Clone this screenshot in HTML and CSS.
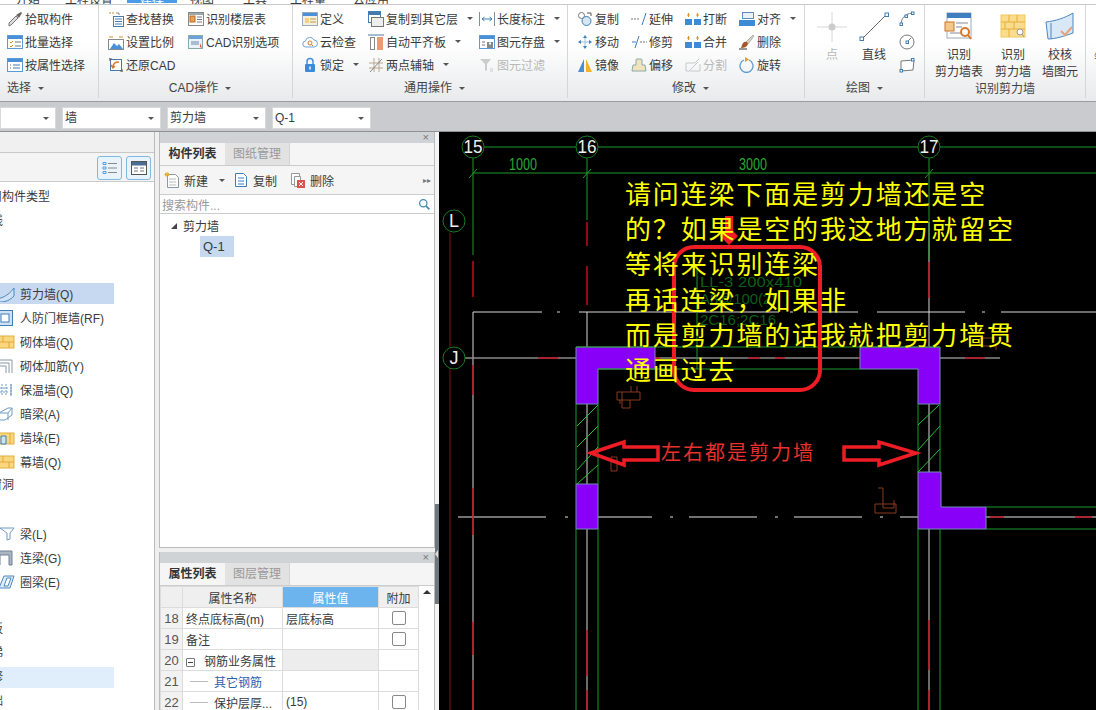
FILE: index.html
```html
<!DOCTYPE html>
<html lang="zh-CN">
<head>
  <meta charset="UTF-8">
  <title>剪力墙 识别</title>
  <link rel="stylesheet" href="styles.css">
</head>
<body>
  <!-- icon set -->
  <svg class="defs" width="0" height="0">
    <symbol id="i-pick" viewBox="0 0 16 16"><path d="M2 15l2-1 7-7-2-2-7 7z" fill="#ddd" stroke="#777"/><path d="M9 4l3 3 3-5-1-1z" fill="#666"/></symbol>
    <symbol id="i-batch" viewBox="0 0 16 16"><rect x=".5" y="1.5" width="15" height="13" fill="#fff" stroke="#5b9bd5"/><rect x="1" y="2" width="14" height="3" fill="#4a90d9"/><path d="M3 8l1 1 2-2M3 12l1 1 2-2" fill="none" stroke="#d98c2b"/><path d="M8 8h6M8 12h6" stroke="#777"/></symbol>
    <symbol id="i-attr" viewBox="0 0 16 16"><rect x=".5" y="1.5" width="15" height="13" fill="#fff" stroke="#5b9bd5"/><rect x="1" y="2" width="14" height="3" fill="#4a90d9"/><path d="M3 8h1M3 11h1M6 8h7M6 11h7" stroke="#4a78a8"/></symbol>
    <symbol id="i-find" viewBox="0 0 16 16"><path d="M1 2h5" stroke="#d98c2b" stroke-dasharray="2 1"/><path d="M8 2l3 0v2" fill="none" stroke="#888"/><rect x="5.500" y="5.500" width="10" height="10" fill="#fff" stroke="#3f7fb5"/><path d="M7 8h7M7 10.500h7M7 13h7" stroke="#3f7fb5"/></symbol>
    <symbol id="i-floor" viewBox="0 0 16 16"><rect x=".5" y="1.500" width="15" height="13" fill="#fff" stroke="#888"/><rect x="1" y="2" width="14" height="2" fill="#9aa"/><rect x="2" y="5" width="5" height="6" fill="#e8a05a" stroke="#c06a20"/><path d="M9 6h5M9 8.500h5M9 11h5" stroke="#778"/></symbol>
    <symbol id="i-scale" viewBox="0 0 16 16"><path d="M1 3h4M11 3h4" stroke="#d98c2b"/><rect x=".5" y="5.500" width="15" height="10" fill="#fff" stroke="#888"/><path d="M2 15l4-6 3 3 2-2 4 5z" fill="#4a90d9"/></symbol>
    <symbol id="i-cad" viewBox="0 0 16 16"><rect x=".5" y="1.500" width="14" height="13" fill="#eaf2fb" stroke="#8aa"/><rect x="1" y="2" width="13" height="3" fill="#6fa3d8"/><path d="M3 8h8M3 10h8" stroke="#6a88a8"/><path d="M12 9l2 5-2-1z" fill="#d9503f"/></symbol>
    <symbol id="i-restore" viewBox="0 0 16 16"><rect x="2.500" y="2.500" width="11" height="11" fill="#fff" stroke="#4a78a8"/><path d="M1 2h3M2 1v3M12 14h3M14 12v3" stroke="#666"/><path d="M11 5c-4 0-6 2-6 5M3 8l2 3 2-2" fill="none" stroke="#d9782b" stroke-width="1.400"/></symbol>
    <symbol id="i-define" viewBox="0 0 16 16"><rect x=".5" y="1.500" width="15" height="13" fill="#f5efdc" stroke="#9ab"/><rect x="1" y="2" width="14" height="3" fill="#4a90d9"/><path d="M8 8h6M8 11h6" stroke="#c79b3b"/><rect x="3" y="7" width="4" height="5" fill="#f2d27a"/></symbol>
    <symbol id="i-cloud" viewBox="0 0 16 16"><path d="M4 13a3 3 0 0 1-.5-6 4.500 4.500 0 0 1 8.500-1 3.500 3.500 0 0 1 0 7z" fill="#fff" stroke="#6fa3d8"/><circle cx="8" cy="9" r="2" fill="none" stroke="#d9782b"/><path d="M9.500 10.500l1.500 1.500" stroke="#d9782b"/></symbol>
    <symbol id="i-lock" viewBox="0 0 16 16"><path d="M5 7V4.500a3 3 0 0 1 6 0V7" fill="none" stroke="#4a90d9" stroke-width="1.500"/><rect x="3" y="7" width="10" height="8" rx="1" fill="#3f8ad6"/><rect x="7.300" y="9.500" width="1.400" height="3" fill="#fff"/></symbol>
    <symbol id="i-copyfloor" viewBox="0 0 16 16"><rect x=".5" y=".5" width="12" height="11" fill="#fff" stroke="#3f7fb5"/><rect x="1" y="1" width="11" height="3" fill="#4a78a8"/><rect x="3.500" y="6.500" width="12" height="9" fill="#eee" stroke="#777"/></symbol>
    <symbol id="i-board" viewBox="0 0 16 16"><path d="M0 1h16" stroke="#4a78a8"/><rect x="2.500" y="3.500" width="4" height="12" fill="#fff" stroke="#888"/><rect x="9" y="3" width="6" height="13" fill="#ee9a70"/></symbol>
    <symbol id="i-twopt" viewBox="0 0 16 16"><path d="M1 6h14M1 11h14M6 1v14M11 1v14" stroke="#b9a68c"/><path d="M2 15L14 2" stroke="#888"/></symbol>
    <symbol id="i-length" viewBox="0 0 16 16"><path d="M.5 1v14M15.500 1v14" stroke="#7c8fa3"/><path d="M3 8h10M3 8l2.500-2M3 8l2.500 2M13 8l-2.500-2M13 8l-2.500 2" fill="none" stroke="#3f7fb5"/></symbol>
    <symbol id="i-save" viewBox="0 0 16 16"><rect x=".5" y="1.500" width="15" height="13" fill="#fff" stroke="#5b9bd5"/><rect x="1" y="2" width="14" height="3" fill="#4a90d9"/><path d="M3 8h3M3 11h3" stroke="#777"/><rect x="8" y="8" width="6" height="6" fill="#888"/><rect x="10" y="8.500" width="2" height="2" fill="#fff"/></symbol>
    <symbol id="i-filter" viewBox="0 0 16 16"><path d="M1 2h11L8 7v6l-2 1V7z" fill="#ccc"/><path d="M11 12h3M11 14h3" stroke="#ccc"/></symbol>
    <symbol id="i-copy" viewBox="0 0 16 16"><circle cx="4.500" cy="4.500" r="3" fill="#fff" stroke="#777"/><circle cx="9.500" cy="10" r="4.500" fill="#d6e6f5" stroke="#3f7fb5"/><path d="M10 2h4v3" fill="none" stroke="#555"/></symbol>
    <symbol id="i-move" viewBox="0 0 16 16"><path d="M8 1l2 3H6zM8 15l-2-3h4zM1 8l3-2v4zM15 8l-3 2V6z" fill="#3f7fb5"/><path d="M8 4v8M4 8h8" stroke="#9dbfdd"/></symbol>
    <symbol id="i-mirror" viewBox="0 0 16 16"><path d="M7 2v13H1z" fill="#4a8fd0"/><path d="M9 2v13h6z" fill="#f0b429"/></symbol>
    <symbol id="i-extend" viewBox="0 0 16 16"><path d="M0 8h9" stroke="#777" stroke-dasharray="2 1"/><path d="M11 14l4-12" stroke="#3f7fb5"/></symbol>
    <symbol id="i-trim" viewBox="0 0 16 16"><path d="M9 8h7" stroke="#777" stroke-dasharray="2 1"/><path d="M1 8h4" stroke="#3f7fb5"/><path d="M4 14L8 2" stroke="#3f7fb5"/></symbol>
    <symbol id="i-offset" viewBox="0 0 16 16"><path d="M5 8V3a1 1 0 0 1 1-1h4a1 1 0 0 1 1 1v5h3l1 6H1l1-6z" fill="#f1e3bd" stroke="#8aa"/></symbol>
    <symbol id="i-split" viewBox="0 0 16 16"><path d="M1 14V6h9l4-4M1 14h14V7" fill="none" stroke="#c8c8c8"/><path d="M5 13l8-8" stroke="#c8c8c8"/></symbol>
    <symbol id="i-break" viewBox="0 0 16 16"><rect x="0" y="8" width="7" height="6" fill="#3f8ad6"/><rect x="9" y="8" width="7" height="6" fill="#3f8ad6"/><path d="M3.500 2v4M12.500 2v4M2 4h3M11 4h3" stroke="#d9982b"/></symbol>
    <symbol id="i-align" viewBox="0 0 16 16"><rect x="3.500" y="1.500" width="11" height="6" fill="#e8f0f8" stroke="#5b8fc0"/><rect x="0" y="9" width="16" height="6" fill="#3f8ad6"/></symbol>
    <symbol id="i-del" viewBox="0 0 16 16"><path d="M7 8l7-7 1 1-6 8z" fill="#d9d2c0" stroke="#777" stroke-width=".5"/><path d="M3 11c1-3 3-4 5-3l1 2c-1 3-4 4-7 4z" fill="#a5562b"/><path d="M0 15h8" stroke="#333"/></symbol>
    <symbol id="i-rotate" viewBox="0 0 16 16"><path d="M5 3a6.500 6.500 0 1 0 5 0" fill="none" stroke="#5b9bd5" stroke-width="1.300"/><path d="M6 0l4 2.500L6 5z" fill="#e8982b"/></symbol>
    <symbol id="i-arc" viewBox="0 0 16 16"><path d="M2 14C2 7 6 3 13 2" fill="none" stroke="#777"/><rect x="1" y="12" width="2.500" height="2.500" fill="#fff" stroke="#3f7fb5"/><rect x="6" y="4" width="2.500" height="2.500" fill="#fff" stroke="#3f7fb5"/><rect x="12.500" y="1" width="2.500" height="2.500" fill="#fff" stroke="#3f7fb5"/></symbol>
    <symbol id="i-circle" viewBox="0 0 16 16"><circle cx="8" cy="8" r="7" fill="#fff" stroke="#777"/><rect x="7" y="7" width="2.500" height="2.500" fill="#fff" stroke="#3f7fb5"/><path d="M9 7l3-3" stroke="#777"/></symbol>
    <symbol id="i-rect" viewBox="0 0 16 16"><path d="M2 4l13-1-1 10-12 1z" fill="#fff" stroke="#777"/><rect x="12.500" y="1.500" width="2.500" height="2.500" fill="#fff" stroke="#3f7fb5"/><rect x="1" y="12.500" width="2.500" height="2.500" fill="#fff" stroke="#3f7fb5"/></symbol>
    <symbol id="i-new" viewBox="0 0 16 16"><path d="M3.500 2.500h8l3 3v10h-11z" fill="#fff" stroke="#8a99a8"/><path d="M5 7h7M5 10h7M5 13h7" stroke="#bbb"/><path d="M3 0v5M.5 2.500h5M1 1l4 3M5 1L1 4" stroke="#e8a52b"/></symbol>
    <symbol id="i-dup" viewBox="0 0 16 16"><path d="M2.500 1.500h8l3 3v10h-11z" fill="#fff" stroke="#3f7fb5"/><path d="M5 6h6M5 9h6M5 12h6" stroke="#3f7fb5"/></symbol>
    <symbol id="i-remove" viewBox="0 0 16 16"><path d="M1.500 1.500h8v11h-8z" fill="#fff" stroke="#999"/><path d="M4.500 4.500h6v10h-6z" fill="#fff" stroke="#999"/><rect x="7" y="8" width="8" height="8" fill="#d9534f"/><path d="M9 10l4 4M13 10l-4 4" stroke="#fff"/></symbol>
    <symbol id="i-wall" viewBox="0 0 16 16"><path d="M-6 13c7 0 14-3 20-11v8c-4 4-8 6-14 6z" fill="#cfe2f5" stroke="#4a88c0"/></symbol>
    <symbol id="i-door" viewBox="0 0 16 16"><rect x="-2.500" y=".5" width="15" height="15" fill="#cfe2f5" stroke="#3f7fb5"/><rect x="1" y="4" width="8" height="8" fill="#fff" stroke="#3f7fb5"/></symbol>
    <symbol id="i-brick" viewBox="0 0 16 16"><rect x="-2" y="2" width="16" height="12" fill="#f8d77f" stroke="#e0b040"/><path d="M-2 8h16M3 2v6M9 8v6" stroke="#e8a53b" fill="none"/></symbol>
    <symbol id="i-rebar" viewBox="0 0 16 16"><path d="M-2 2h14v13M-2 5h11v10M-2 8h8v7" fill="none" stroke="#8a99a8"/></symbol>
    <symbol id="i-insul" viewBox="0 0 16 16"><path d="M2 2v12M6 2v12M11 2v12M0 6h8M0 10h8" stroke="#6f9cc4" stroke-dasharray="2 1" fill="none"/><path d="M11 2v12" stroke="#6f9cc4"/></symbol>
    <symbol id="i-beam" viewBox="0 0 16 16"><path d="M-1 7l9-5h4v7l-7 5h-6zM-1 7h9v7M8 7l4-5" fill="#fff" stroke="#6f9cc4"/></symbol>
    <symbol id="i-pier" viewBox="0 0 16 16"><rect x="-2" y="3" width="16" height="11" fill="#f8d77f" stroke="#e0b040"/><path d="M1 6h5v8H1z" fill="#cfe2f5" stroke="#3f7fb5"/><path d="M10 3v11" stroke="#e8a53b"/></symbol>
    <symbol id="i-lbeam" viewBox="0 0 16 16"><path d="M0 2h14l-4 5v6l-3 1V7z" fill="#fff" stroke="#6f9cc4"/></symbol>
    <symbol id="i-link" viewBox="0 0 16 16"><path d="M-3 1h15v14H9V5H0v10h-3z" fill="#a9b5c1" stroke="#6f8296"/></symbol>
    <symbol id="i-ring" viewBox="0 0 16 16"><path d="M4 2h10l-4 12H-1z" fill="#e0ecf8" stroke="#4a88c0"/><path d="M7 4h4l-3 8H4z" fill="#fff" stroke="#4a88c0"/></symbol>
    <symbol id="i-search" viewBox="0 0 16 16"><circle cx="6.500" cy="6.500" r="4.500" fill="#fff" stroke="#3f8ab5" stroke-width="1.500"/><path d="M10 10l4 4" stroke="#3f8ab5" stroke-width="2"/></symbol>
    <symbol id="i-list" viewBox="0 0 16 16"><path d="M1 2.500h3v2H1zM1 7h3v2H1zM1 11.500h3v2H1z" fill="none" stroke="#5b9bd5"/><path d="M6 3.500h9M6 8h9M6 12.500h9" stroke="#888"/></symbol>
    <symbol id="i-form" viewBox="0 0 16 16"><rect x=".5" y="1.500" width="15" height="13" fill="#fff" stroke="#555"/><rect x="1" y="2" width="14" height="3.500" fill="#4a6f94"/><path d="M3 8h4M9 8h4M3 11h4M9 11h4" stroke="#777"/></symbol>
  </svg>

  <div class="tabs">
    <span class="tab tab-first">开始</span>
    <span class="tab tab-setup">工程设置</span>
    <span class="tab tab-active">建模</span>
    <span class="tab tab-view">视图</span>
    <span class="tab tab-tool">工具</span>
    <span class="tab tab-qty">工程量</span>
    <span class="tab tab-cloud">云应用</span>
  </div>

  <div class="ribbon">
    <div class="group group-select">
      <div class="group-body">
        <div class="col">
          <div class="item"><svg class="ic"><use href="#i-pick"/></svg>拾取构件</div>
          <div class="item"><svg class="ic"><use href="#i-batch"/></svg>批量选择</div>
          <div class="item"><svg class="ic"><use href="#i-attr"/></svg>按属性选择</div>
        </div>
      </div>
      <div class="group-label label-left">选择<i class="caret"></i></div>
    </div>
    <div class="group group-cad">
      <div class="group-body">
        <div class="col col-80">
          <div class="item"><svg class="ic"><use href="#i-find"/></svg>查找替换</div>
          <div class="item"><svg class="ic"><use href="#i-scale"/></svg>设置比例</div>
          <div class="item"><svg class="ic"><use href="#i-restore"/></svg>还原CAD</div>
        </div>
        <div class="col">
          <div class="item"><svg class="ic"><use href="#i-floor"/></svg>识别楼层表</div>
          <div class="item"><svg class="ic"><use href="#i-cad"/></svg>CAD识别选项</div>
        </div>
      </div>
      <div class="group-label">CAD操作<i class="caret"></i></div>
    </div>
    <div class="group group-common">
      <div class="group-body">
        <div class="col col-66">
          <div class="item"><svg class="ic"><use href="#i-define"/></svg>定义</div>
          <div class="item"><svg class="ic"><use href="#i-cloud"/></svg>云检查</div>
          <div class="item"><svg class="ic"><use href="#i-lock"/></svg>锁定<i class="caret"></i></div>
        </div>
        <div class="col col-111">
          <div class="item"><svg class="ic"><use href="#i-copyfloor"/></svg>复制到其它层<i class="caret"></i></div>
          <div class="item"><svg class="ic"><use href="#i-board"/></svg>自动平齐板<i class="caret"></i></div>
          <div class="item"><svg class="ic"><use href="#i-twopt"/></svg>两点辅轴<i class="caret"></i></div>
        </div>
        <div class="col">
          <div class="item"><svg class="ic"><use href="#i-length"/></svg>长度标注<i class="caret"></i></div>
          <div class="item"><svg class="ic"><use href="#i-save"/></svg>图元存盘<i class="caret"></i></div>
          <div class="item item-off"><svg class="ic"><use href="#i-filter"/></svg>图元过滤</div>
        </div>
      </div>
      <div class="group-label">通用操作<i class="caret"></i></div>
    </div>
    <div class="group group-edit">
      <div class="group-body">
        <div class="col col-54">
          <div class="item"><svg class="ic"><use href="#i-copy"/></svg>复制</div>
          <div class="item"><svg class="ic"><use href="#i-move"/></svg>移动</div>
          <div class="item"><svg class="ic"><use href="#i-mirror"/></svg>镜像</div>
        </div>
        <div class="col col-54">
          <div class="item"><svg class="ic"><use href="#i-extend"/></svg>延伸</div>
          <div class="item"><svg class="ic"><use href="#i-trim"/></svg>修剪</div>
          <div class="item"><svg class="ic"><use href="#i-offset"/></svg>偏移</div>
        </div>
        <div class="col col-54">
          <div class="item"><svg class="ic"><use href="#i-break"/></svg>打断</div>
          <div class="item"><svg class="ic"><use href="#i-break"/></svg>合并</div>
          <div class="item item-off"><svg class="ic"><use href="#i-split"/></svg>分割</div>
        </div>
        <div class="col">
          <div class="item"><svg class="ic"><use href="#i-align"/></svg>对齐<i class="caret"></i></div>
          <div class="item"><svg class="ic"><use href="#i-del"/></svg>删除</div>
          <div class="item"><svg class="ic"><use href="#i-rotate"/></svg>旋转</div>
        </div>
      </div>
      <div class="group-label">修改<i class="caret"></i></div>
    </div>
    <div class="group group-draw">
      <div class="group-body">
        <div class="big big-point">
          <svg class="big-ic" viewBox="0 0 30 30"><path d="M15 0v30M0 15h30" stroke="#d8d8d8"/><circle cx="15" cy="15" r="3.500" fill="#ccc"/></svg>
          <span>点</span>
        </div>
        <div class="big big-line">
          <svg class="big-ic" viewBox="0 0 30 30"><path d="M3 27L27 3" stroke="#666"/><rect x="1" y="25" width="3.500" height="3.500" fill="#fff" stroke="#3f7fb5"/><rect x="26" y="1" width="3.500" height="3.500" fill="#fff" stroke="#3f7fb5"/></svg>
          <span>直线</span>
        </div>
        <div class="col col-small">
          <div class="item"><svg class="ic"><use href="#i-arc"/></svg></div>
          <div class="item"><svg class="ic"><use href="#i-circle"/></svg></div>
          <div class="item"><svg class="ic"><use href="#i-rect"/></svg></div>
        </div>
      </div>
      <div class="group-label">绘图<i class="caret"></i></div>
    </div>
    <div class="group group-recog">
      <div class="group-body">
        <div class="big big-wide">
          <svg class="big-ic" viewBox="0 0 30 30"><rect x="3" y="1" width="24" height="25" fill="#fff" stroke="#9ab"/><rect x="3" y="1" width="24" height="5" fill="#3f7fc0"/><path d="M12 11h12M12 15h6M6 21h11" stroke="#889"/><rect x="1" y="10" width="9" height="9" fill="#f2c98a" stroke="#c9752b"/><circle cx="21" cy="20" r="4" fill="#fff" stroke="#d9782b" stroke-width="2"/><path d="M24 23l3 4" stroke="#d9782b" stroke-width="2"/></svg>
          <span>识别<br>剪力墙表</span>
        </div>
        <div class="big big-mid">
          <svg class="big-ic" viewBox="0 0 30 30"><rect x="3" y="3" width="24" height="22" fill="#f9dc8c" stroke="#f0c95c"/><path d="M3 10h24M3 17h24M11 3v7M19 3v7M7 10v7M16 10v7M11 17v8" stroke="#e8ae3e" fill="none"/><circle cx="22" cy="20" r="3" fill="#fff" stroke="#999"/><path d="M24 22l2 3" stroke="#999"/></svg>
          <span>识别<br>剪力墙</span>
        </div>
        <div class="big big-end">
          <svg class="big-ic" viewBox="0 0 30 30"><path d="M1 10C10 9 20 6 28 1v20C20 24 10 27 3 27z" fill="#d9e8f6" stroke="#4a88c0"/><path d="M6 11v16" stroke="#4a88c0"/><path d="M16 19l4 4 7-8" fill="none" stroke="#e8a27a" stroke-width="2"/></svg>
          <span>校核<br>墙图元</span>
        </div>
      </div>
      <div class="group-label">识别剪力墙</div>
    </div>
    <div class="group group-rest"><span class="rest-char">钢</span></div>
  </div>

  <div class="combos">
    <div class="combo combo-first"><i class="caret"></i></div>
    <div class="combo">墙<i class="caret"></i></div>
    <div class="combo">剪力墙<i class="caret"></i></div>
    <div class="combo">Q-1<i class="caret"></i></div>
  </div>

  <div class="main">
    <div class="nav">
      <div class="nav-top"></div>
      <div class="nav-tools">
        <span class="nav-btn"><svg class="ic"><use href="#i-list"/></svg></span>
        <span class="nav-btn"><svg class="ic"><use href="#i-form"/></svg></span>
      </div>
      <ul class="nav-list">
        <li class="cut cut-10">用构件类型</li>
        <li class="cut cut-9">线</li>
        <li></li>
        <li></li>
        <li class="sel"><svg class="ic"><use href="#i-wall"/></svg>剪力墙(Q)</li>
        <li><svg class="ic"><use href="#i-door"/></svg>人防门框墙(RF)</li>
        <li><svg class="ic"><use href="#i-brick"/></svg>砌体墙(Q)</li>
        <li><svg class="ic"><use href="#i-rebar"/></svg>砌体加筋(Y)</li>
        <li><svg class="ic"><use href="#i-insul"/></svg>保温墙(Q)</li>
        <li><svg class="ic"><use href="#i-beam"/></svg>暗梁(A)</li>
        <li><svg class="ic"><use href="#i-pier"/></svg>墙垛(E)</li>
        <li><svg class="ic"><use href="#i-brick"/></svg>幕墙(Q)</li>
        <li class="cut cut-22">门窗洞</li>
        <li></li>
        <li><svg class="ic"><use href="#i-lbeam"/></svg>梁(L)</li>
        <li><svg class="ic"><use href="#i-link"/></svg>连梁(G)</li>
        <li><svg class="ic"><use href="#i-ring"/></svg>圈梁(E)</li>
        <li></li>
        <li class="cut cut-9">板</li>
        <li class="cut cut-9">梯</li>
        <li class="cut cut-9 hover">修</li>
        <li class="cut cut-9">础</li>
      </ul>
    </div>

    <div class="mid">
      <section class="panel panel-list">
        <div class="panel-title">×</div>
        <div class="panel-tabs">
          <span class="ptab ptab-on">构件列表</span>
          <span class="ptab">图纸管理</span>
        </div>
        <div class="list-tools">
          <span class="tool"><svg class="ic"><use href="#i-new"/></svg>新建<i class="caret"></i></span>
          <span class="tool"><svg class="ic"><use href="#i-dup"/></svg>复制</span>
          <span class="tool"><svg class="ic"><use href="#i-remove"/></svg>删除</span>
          <span class="more">▸▸</span>
        </div>
        <div class="search">搜索构件...<svg class="ic"><use href="#i-search"/></svg></div>
        <div class="tree">
          <div class="tree-root"><i class="tree-arrow"></i>剪力墙</div>
          <div class="tree-leaf">Q-1</div>
        </div>
      </section>

      <section class="panel panel-props">
        <div class="panel-title">×</div>
        <div class="panel-tabs">
          <span class="ptab ptab-on">属性列表</span>
          <span class="ptab">图层管理</span>
        </div>
        <div class="props-wrap">
          <table class="props">
            <colgroup><col class="c-num"><col class="c-name"><col class="c-val"><col class="c-add"></colgroup>
            <tr class="props-head"><th></th><th>属性名称</th><th class="th-on">属性值</th><th>附加</th></tr>
            <tr><td class="num">18</td><td>终点底标高(m)</td><td>层底标高</td><td class="chk"><i class="box"></i></td></tr>
            <tr><td class="num">19</td><td>备注</td><td></td><td class="chk"><i class="box"></i></td></tr>
            <tr><td class="num">20</td><td><i class="minus"></i>钢筋业务属性</td><td class="grey"></td><td></td></tr>
            <tr><td class="num">21</td><td class="sub link">其它钢筋</td><td></td><td></td></tr>
            <tr><td class="num">22</td><td class="sub">保护层厚...</td><td>(15)</td><td class="chk"><i class="box"></i></td></tr>
          </table>
          <div class="props-scroll"><i class="scroll-up"></i></div>
        </div>
      </section>
    </div>

    <div class="splitter"><div class="splitter-grip"><i class="grip-arrow"></i></div></div>

    <div class="canvas">
      <!-- viewBox keeps page coordinates so the drawing can be read against the reference -->
      <svg class="cad" viewBox="439 132 657 578" width="657" height="578">
        <!-- axis lines -->
        <g stroke="#d8d8d8" fill="none">
          <path d="M473 312V710M587 312V710M929 222V710"/>
          <path d="M473 312H542M557 312h3M579 312H779M790 312h3M808 312H858M877 312H965M982 312h3M1001 312H1096"/>
          <path d="M458 517H546M565 517h3M584 517H652M670 517h3M689 517H757M775 517h3M794 517H862M880 517h3M900 517H1096" stroke="#e4e4e4"/>
          <path d="M465 358H1000" stroke="#8a8a8a" stroke-width="1.500"/>
        </g>
        <g stroke="#c00d1e" fill="none" stroke-width="1.500">
          <path d="M473 261V297M473 365V395M473 488V535M473 622V655M587 222V246M587 266V305M587 365V395M929 262V298M929 360V395"/>
          <path d="M587 630V676M587 690V710M929 620V670M929 690V710M473 680V710"/>
          <path d="M538 358H558M640 358H660M748 358H760M775 358H785M858 358H880M965 358H985M968 517H985M990 517H1004M1075 517H1092"/>
          <path d="M450 233V710" stroke="#8c0f18" stroke-width="1"/>
        </g>
        <!-- shear wall fills -->
        <g fill="#8800f8" stroke="#6f8fb0">
          <path d="M576 347H655V369H598V404H576z"/>
          <path d="M860 347H940V404H918V369H860z"/>
          <path d="M576 484H598V529H576z"/>
          <path d="M918 472H941V507H986V529H918z"/>
        </g>
        <!-- green lines -->
        <g stroke="#1f9a2e" fill="none">
          <path d="M484 147H576M598 147H918M940 147H1096"/>
          <path d="M473 173H1096"/>
          <path d="M473 158V255M587 158V220M929 158V260"/>
          <path d="M469 178L477 169M583 178L591 169M925 178L933 169"/>
          <path d="M576 347H940M598 369H860M697 265V369"/>
          <path d="M576 404V484M598 404V484M918 404V472M940 404V472"/>
          <path d="M576 529V710M598 529V710M918 529V710M940 529V710"/>
          <path d="M986 507H1096M986 529H1096"/>
          <g stroke="#29c03a">
            <path d="M577 426L598 405M577 447L598 426M577 470L598 447M577 484L598 465"/>
            <path d="M918 425L939 405M918 450L940 426M918 472L940 449"/>
          </g>
        </g>
        <!-- axis bubbles -->
        <g fill="#000" stroke="#157a22">
          <circle cx="473" cy="147" r="11"/>
          <circle cx="587" cy="147" r="11"/>
          <circle cx="929" cy="147" r="11"/>
          <circle cx="454" cy="221" r="11"/>
          <circle cx="454" cy="358" r="11"/>
        </g>
        <g class="bubble-text" text-anchor="middle">
          <text x="473" y="153" textLength="19" lengthAdjust="spacingAndGlyphs">15</text>
          <text x="587" y="153" textLength="19" lengthAdjust="spacingAndGlyphs">16</text>
          <text x="929" y="153" textLength="19" lengthAdjust="spacingAndGlyphs">17</text>
          <text x="454" y="227">L</text>
          <text x="454" y="364">J</text>
        </g>
        <g class="dim-text" text-anchor="middle">
          <text x="523" y="170" textLength="28" lengthAdjust="spacingAndGlyphs">1000</text>
          <text x="753" y="170" textLength="28" lengthAdjust="spacingAndGlyphs">3000</text>
        </g>
        <g class="beam-text">
          <text x="700" y="287" textLength="102" lengthAdjust="spacingAndGlyphs">LL-3 200x410</text>
          <text x="700" y="304" textLength="76" lengthAdjust="spacingAndGlyphs">A8@100(2)</text>
          <text x="700" y="325" textLength="76" lengthAdjust="spacingAndGlyphs">2C16;2C16</text>
        </g>
        <!-- rebar marks -->
        <g stroke="#8a3a20" fill="none">
          <path d="M617 392H640V400H617zM622 392V408H630V400M631 392V386M637 392V386"/>
          <path d="M611 457H617V471H611z"/>
          <path d="M620 400V404"/>
          <path d="M878 488H883V508H894V500M875 504H896V513H875z"/>
          <path d="M995 338H980V346H996V350"/>
        </g>
        <!-- red annotation -->
        <g fill="none" stroke="#ee1c25" stroke-width="4">
          <rect x="674" y="247" width="146" height="143" rx="20"/>
          <path d="M591 453L624 442V447H658V460H624V465z" stroke-width="3.500"/>
          <path d="M844 447H879V442L916 453L879 465V460H844z" stroke-width="3.500"/>
        </g>
        <path d="M725 216H733V231L738 236L729 245L720 236L725 231z" fill="#ee1c25"/>
      </svg>
      <div class="note">请问连梁下面是剪力墙还是空
的？如果是空的我这地方就留空
等将来识别连梁
再话连梁，如果非
而是剪力墙的话我就把剪力墙贯
通画过去</div>
      <div class="wall-note">左右都是剪力墙</div>
    </div>
  </div>
</body>
</html>
```

FILE: styles.css
```css
* {
  box-sizing: border-box;
}

html, body {
  margin: 0;
  height: 710px;
  overflow: hidden;
}

body {
  font-family: "Liberation Sans", "Noto Sans CJK SC", sans-serif;
  font-size: 12px;
  color: #3a3a3a;
  background: #fff;
}

ul {
  list-style: none;
  margin: 0;
  padding: 0;
}

.defs {
  position: absolute;
}

.ic {
  width: 16px;
  height: 16px;
  flex: none;
  overflow: visible;
}

.caret {
  display: inline-block;
  width: 0;
  height: 0;
  margin-left: 7px;
  border-left: 3px solid transparent;
  border-right: 3px solid transparent;
  border-top: 3px solid #555;
  vertical-align: middle;
}

/* Top tabs, only the bottom edge is on screen */
.tabs {
  display: flex;
  height: 5px;
  overflow: hidden;
  background: #fff;
  border-bottom: 1px solid #c8c8c8;
}

.tab {
  display: block;
  height: 4px;
  line-height: 2px;
  margin-top: -1px;
}

.tab-first { width: 65px; padding-left: 16px; }
.tab-setup { width: 62px; }
.tab-active { width: 50px; background: #4a9be8; color: #fff; text-align: center; margin-right: 13px; }
.tab-view { width: 53px; }
.tab-tool { width: 47px; }
.tab-qty { width: 63px; }
.tab-cloud { width: 50px; }

/* Ribbon */
.ribbon {
  display: flex;
  height: 97px;
  background: linear-gradient(#fff 40%, #e8eaec);
  border-bottom: 1px solid #9a9c9e;
}

.group {
  display: flex;
  flex-direction: column;
  flex: none;
  border-right: 1px solid #d4d6d8;
  margin-bottom: 3px;
}

.group-select { width: 99px; padding-left: 7px; }
.group-cad { width: 194px; padding-left: 9px; }
.group-common { width: 275px; padding-left: 9px; }
.group-edit { width: 237px; padding-left: 9px; }
.group-draw { width: 120px; }
.group-recog { width: 161px; }
.group-rest { flex: 1; border: 0; }

.rest-char {
  display: block;
  margin: 44px 0 0 8px;
}

.group-body {
  display: flex;
  height: 74px;
  padding-top: 2px;
}

.group-label {
  flex: 1;
  text-align: center;
  line-height: 20px;
  color: #444;
}

.group-select .group-label {
  text-align: left;
}

.col {
  display: flex;
  flex-direction: column;
}

.col-80 { width: 80px; }
.col-66 { width: 66px; }
.col-111 { width: 111px; }
.col-54 { width: 54px; }

.col-small {
  margin-left: 10px;
}

.item {
  display: flex;
  align-items: center;
  gap: 2px;
  height: 23px;
  white-space: nowrap;
}

.item .caret {
  margin-left: 7px;
}

.item-off {
  color: #b8b8b8;
}

.big {
  display: flex;
  flex-direction: column;
  align-items: center;
  text-align: center;
  line-height: 17px;
}

.big-ic {
  width: 30px;
  height: 30px;
  flex: none;
  margin-top: 5px;
  margin-bottom: 5px;
}

.big-point { width: 30px; margin-left: 12px; color: #b8b8b8; }
.big-line { width: 30px; margin-left: 12px; }
.big-wide { width: 60px; margin-left: 4px; margin-right: -1px; }
.big-mid { width: 50px; }
.big-end { width: 46px; margin-left: -1px; }

/* Combos under the ribbon */
.combos {
  display: flex;
  gap: 6px;
  height: 29px;
  padding-top: 5px;
  background: #c9cbce;
}

.combo {
  position: relative;
  width: 99px;
  height: 22px;
  padding-left: 2px;
  line-height: 21px;
  background: #fff;
  border: 1px solid #d9d9d9;
}

.combo-first {
  width: 56px;
}

.combo .caret {
  position: absolute;
  right: 6px;
  top: 9px;
}

.main {
  display: flex;
  height: 579px;
  border-top: 1px solid #8f9194;
}

/* Left navigation */
.nav {
  flex: none;
  width: 155px;
  border-right: 1px solid #bbb;
  background: #fff;
}

.nav-top {
  height: 21px;
  background: #f0f0f0;
  border-bottom: 1px solid #c8c8c8;
}

.nav-tools {
  display: flex;
  justify-content: flex-end;
  gap: 4px;
  height: 29px;
  padding: 3px 3px 0 0;
  background: #f4f4f4;
  border-bottom: 1px solid #ccc;
}

.nav-btn {
  display: flex;
  align-items: center;
  justify-content: center;
  width: 25px;
  height: 24px;
  background: #e8f3fb;
  border: 1px solid #7fb8e0;
  border-radius: 3px;
}

.nav-list {
  padding-top: 5px;
  overflow: hidden;
}

.nav-list li {
  display: flex;
  align-items: center;
  gap: 4px;
  width: 114px;
  height: 21px;
  margin-bottom: 3px;
  white-space: nowrap;
}

.nav-list li.sel {
  background: #c6d9f0;
}

.nav-list li.hover {
  background: #e0eefb;
}

.cut-9 { text-indent: -9px; }
.cut-10 { text-indent: -10px; }
.cut-22 { text-indent: -22px; }

.nav-list .cut {
  display: block;
  line-height: 21px;
}

/* Middle panels */
.mid {
  flex: none;
  display: flex;
  flex-direction: column;
  gap: 4px;
  width: 280px;
  padding-left: 4px;
  background: #efefef;
}

.panel {
  background: #fff;
  border-left: 1px solid #bbb;
  border-right: 1px solid #bbb;
}

.panel-list {
  flex: none;
  height: 416px;
  border-bottom: 1px solid #bbb;
}

.panel-props {
  flex: 1;
  overflow: hidden;
}

.panel-title {
  height: 11px;
  padding-right: 5px;
  text-align: right;
  line-height: 11px;
  font-size: 11px;
  color: #777;
  background: #d0d3d6;
}

.panel-tabs {
  display: flex;
  height: 23px;
  background: #f5f5f5;
  border-bottom: 1px solid #ccc;
}

.ptab {
  width: 65px;
  line-height: 22px;
  text-align: center;
  color: #999;
  background: #e2e2e2;
  border-right: 1px solid #d4d4d4;
}

.ptab-on {
  color: #333;
  font-weight: 700;
  background: #f5f5f5;
  border-right: 0;
}

.list-tools {
  display: flex;
  align-items: center;
  height: 29px;
  padding-left: 4px;
  background: #f5f5f5;
  border-bottom: 1px solid #ccc;
}

.tool {
  display: flex;
  align-items: center;
  gap: 4px;
}

.tool:nth-child(1) { width: 69px; }
.tool:nth-child(2) { width: 57px; }

.more {
  margin-left: auto;
  padding-right: 3px;
  font-size: 8px;
  color: #777;
}

.search {
  display: flex;
  align-items: center;
  justify-content: space-between;
  height: 19px;
  padding: 0 3px 0 2px;
  color: #999;
  border-bottom: 1px solid #ccc;
}

.search .ic {
  width: 13px;
  height: 13px;
}

.tree {
  padding-top: 1px;
}

.tree-root {
  display: flex;
  align-items: center;
  height: 21px;
  padding-left: 11px;
}

.tree-arrow {
  width: 0;
  height: 0;
  margin-right: 6px;
  border-left: 6px solid transparent;
  border-bottom: 6px solid #444;
}

.tree-leaf {
  width: 34px;
  height: 21px;
  margin-left: 40px;
  padding-left: 3px;
  line-height: 21px;
  font-size: 13px;
  background: #c6d9f0;
}

/* Splitter between the panels and the canvas */
.splitter {
  flex: none;
  width: 4px;
  padding-top: 372px;
  background: #f4f4f4;
}

.splitter-grip {
  display: flex;
  align-items: center;
  height: 100px;
  background: #6f777d;
}

.grip-arrow {
  width: 0;
  height: 0;
  border-top: 4px solid transparent;
  border-bottom: 4px solid transparent;
  border-right: 3px solid #ddd;
}

/* Property grid */
.props-wrap {
  display: flex;
}

.props {
  width: 258px;
  table-layout: fixed;
  border-collapse: collapse;
}

.c-num { width: 22px; }
.c-name { width: 100px; }
.c-val { width: 96px; }
.c-add { width: 40px; }

.props th,
.props td {
  height: 21px;
  padding: 0 0 0 3px;
  border: 1px solid #dcdcdc;
  font-weight: 400;
  white-space: nowrap;
  overflow: hidden;
}

.props th {
  padding: 0;
  text-align: center;
  background: #efefef;
}

.props .th-on {
  color: #fff;
  background: #6cb4ee;
}

.props .num {
  padding: 0;
  text-align: center;
  font-size: 13px;
  color: #555;
  background: #f2f2f2;
}

.props .grey {
  background: #ededed;
}

.props .chk {
  padding: 0;
  text-align: center;
}

.box {
  display: inline-block;
  width: 14px;
  height: 14px;
  margin-top: 3px;
  border: 1px solid #888;
  border-radius: 2px;
  background: #fff;
}

.minus {
  display: inline-block;
  position: relative;
  width: 9px;
  height: 9px;
  margin-right: 9px;
  vertical-align: -1px;
  border: 1px solid #777;
  border-radius: 1px;
}

.minus::after {
  content: "";
  position: absolute;
  left: 1px;
  top: 3px;
  width: 5px;
  height: 1px;
  background: #444;
}

.props .sub {
  position: relative;
  padding-left: 31px;
}

.props .sub::before {
  content: "";
  position: absolute;
  left: 7px;
  top: 10px;
  width: 18px;
  height: 1px;
  background: #bbb;
}

.props .link {
  color: #2f5fb0;
}

.props-scroll {
  flex: 1;
  background: #fff;
}

.scroll-up {
  display: block;
  width: 0;
  height: 0;
  margin: 4px auto 0;
  border-left: 4px solid transparent;
  border-right: 4px solid transparent;
  border-bottom: 4px solid #333;
}

/* CAD canvas */
.canvas {
  position: relative;
  flex: 1;
  overflow: hidden;
  background: #000;
}

.cad {
  display: block;
  position: absolute;
  left: 0;
  top: 0;
}

.bubble-text {
  font-size: 18px;
  fill: #eee;
}

.dim-text {
  font-size: 17px;
  fill: #24a836;
}

.beam-text {
  font-size: 15px;
  fill: #0b5f16;
}

.note {
  position: absolute;
  left: 186px;
  top: 46px;
  font-family: "Liberation Serif", "Noto Sans CJK SC", serif;
  font-size: 26px;
  letter-spacing: 1.85px;
  line-height: 35.2px;
  color: #ff0;
  white-space: pre;
}

.wall-note {
  position: absolute;
  left: 222px;
  top: 307px;
  font-family: "Liberation Serif", "Noto Sans CJK SC", serif;
  font-size: 20px;
  letter-spacing: 2px;
  line-height: 28px;
  color: #e8302e;
  white-space: nowrap;
}
```
